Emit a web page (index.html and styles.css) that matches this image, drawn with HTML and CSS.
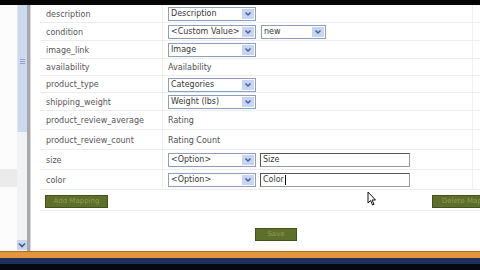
FILE: index.html
```html
<!DOCTYPE html>
<html>
<head>
<meta charset="utf-8">
<link rel="stylesheet" href="styles.css">
</head>
<body>
<div class="screen">
  <div class="topbar"></div>
  <div class="main">
    <div class="leftpane"><div class="leftblock"></div></div>
    <div class="scrollbar">
      <div class="thumb"><div class="grip"></div></div>
      <div class="track"></div>
      <div class="scrollbtn">
        <svg width="8" height="6" viewBox="0 0 8 6"><path d="M1 1.5 L4 4.5 L7 1.5" fill="none" stroke="#3c5a8c" stroke-width="1.6"/></svg>
      </div>
    </div>
    <div class="divider"></div>
    <div class="content">
      <div class="table">
        <div class="row h18">
          <div class="label">description</div>
          <div class="value"><span class="select w88"><span class="seltext">Description</span><span class="arrow"></span></span></div>
          <div class="extra"></div>
        </div>
        <div class="row h18">
          <div class="label">condition</div>
          <div class="value"><span class="select w88"><span class="seltext">&lt;Custom Value&gt;</span><span class="arrow"></span></span><span class="select w65"><span class="seltext">new</span><span class="arrow"></span></span></div>
          <div class="extra"></div>
        </div>
        <div class="row h18">
          <div class="label">image_link</div>
          <div class="value"><span class="select w88"><span class="seltext">Image</span><span class="arrow"></span></span></div>
          <div class="extra"></div>
        </div>
        <div class="row h17">
          <div class="label">availability</div>
          <div class="value">Availability</div>
          <div class="extra"></div>
        </div>
        <div class="row h17">
          <div class="label">product_type</div>
          <div class="value"><span class="select w88"><span class="seltext">Categories</span><span class="arrow"></span></span></div>
          <div class="extra"></div>
        </div>
        <div class="row h18">
          <div class="label">shipping_weight</div>
          <div class="value"><span class="select w88"><span class="seltext">Weight (lbs)</span><span class="arrow"></span></span></div>
          <div class="extra"></div>
        </div>
        <div class="row h19">
          <div class="label">product_review_average</div>
          <div class="value">Rating</div>
          <div class="extra"></div>
        </div>
        <div class="row h20">
          <div class="label">product_review_count</div>
          <div class="value">Rating Count</div>
          <div class="extra"></div>
        </div>
        <div class="row h20">
          <div class="label">size</div>
          <div class="value"><span class="select w88"><span class="seltext">&lt;Option&gt;</span><span class="arrow"></span></span><span class="input">Size</span></div>
          <div class="extra"></div>
        </div>
        <div class="row h20">
          <div class="label">color</div>
          <div class="value"><span class="select w88"><span class="seltext">&lt;Option&gt;</span><span class="arrow"></span></span><span class="input">Color<span class="caret"></span></span></div>
          <div class="extra"></div>
        </div>
      </div>
      <div class="actions">
        <span class="btn add">Add Mapping</span>
        <span class="btn del">Delete Mapping</span>
      </div>
      <div class="saverow">
        <span class="btn save">Save</span>
      </div>
    </div>
    <svg class="cursor" width="10" height="16" viewBox="0 0 10 16"><path d="M1 1 L1 12 L3.5 9.5 L5.5 14 L7 13.3 L5 9 L8.5 9 Z" fill="#fff" stroke="#111" stroke-width="1"/></svg>
  </div>
  <div class="footer">
    <div class="orange"></div>
    <div class="navy"></div>
    <div class="black"></div>
  </div>
</div>
</body>
</html>
```

FILE: styles.css
```css
html, body {
  margin: 0;
  padding: 0;
  width: 480px;
  height: 270px;
  overflow: hidden;
  background: #fff;
}
.screen {
  width: 480px;
  height: 270px;
  display: flex;
  flex-direction: column;
  font-family: "DejaVu Sans", Verdana, sans-serif;
  font-size: 8px;
  color: #505050;
}
.topbar {
  height: 5px;
  background: #050505;
  flex: none;
}
.main {
  flex: 1;
  display: flex;
  position: relative;
  overflow: hidden;
  min-height: 0;
}
.leftpane {
  width: 17px;
  flex: none;
  background: #fcfcfc;
  display: flex;
  flex-direction: column;
  justify-content: flex-start;
}
.leftblock {
  margin-top: 164px;
  height: 18px;
  background: #ebebeb;
}
.scrollbar {
  width: 10px;
  flex: none;
  display: flex;
  flex-direction: column;
  background: #f3f4f6;
}
.thumb {
  height: 127px;
  background: #cdd9ef;
  border-left: 1px solid #dfe7f6;
  display: flex;
  align-items: flex-start;
  justify-content: center;
}
.grip {
  margin-top: 54px;
  width: 5px;
  height: 5px;
  background: repeating-linear-gradient(#8ea3c7 0 1px, transparent 1px 2px);
}
.track {
  flex: 1;
  background: #f1f2f4;
}
.scrollbtn {
  height: 10px;
  margin-bottom: 1px;
  background: #c8d6f0;
  display: flex;
  align-items: center;
  justify-content: center;
}
.divider {
  width: 3px;
  flex: none;
  background: #a8a8a8;
  border-right: 1px solid #d8d8d8;
}
.content {
  flex: none;
  width: 472px;
  margin-left: 9px;
  display: flex;
  flex-direction: column;
}
.table {
  display: flex;
  flex-direction: column;
}
.row {
  display: grid;
  grid-template-columns: 123px 310px 1fr;
  box-sizing: border-box;
  border-bottom: 1px solid #ececec;
}
.h17 { height: 17px; }
.h18 { height: 18px; }
.h19 { height: 19px; }
.h20 { height: 20px; }
.label {
  padding-left: 6px;
  padding-top: 1px;
  display: flex;
  align-items: center;
  border-right: 1px solid #efefef;
  color: #555;
}
.value {
  padding-left: 5px;
  padding-top: 1px;
  display: flex;
  align-items: center;
  gap: 4px;
  color: #505050;
  border-right: 1px solid #f0f0f0;
}
.select {
  height: 14px;
  box-sizing: border-box;
  border: 1px solid #8aa0bd;
  background: #fff;
  display: flex;
  align-items: stretch;
  color: #383838;
}
.w88 { width: 88px; }
.w65 { width: 65px; margin-left: 1px; }
.seltext {
  flex: 1;
  padding-left: 2px;
  line-height: 12px;
  white-space: nowrap;
  overflow: hidden;
}
.arrow {
  width: 12px;
  margin: 1px;
  background: #c6d5f5 url("data:image/svg+xml;utf8,<svg xmlns='http://www.w3.org/2000/svg' width='12' height='10'><path d='M3.5 3.5 L6 6 L8.5 3.5' fill='none' stroke='%234b5f8a' stroke-width='1.5'/></svg>") center / 12px 10px no-repeat;
}
.input {
  width: 150px;
  height: 14px;
  box-sizing: border-box;
  border: 1px solid #9a9a9a;
  border-top-color: #555;
  border-left-color: #555;
  background: #fff;
  padding-left: 2px;
  line-height: 12px;
  color: #383838;
  display: flex;
  align-items: center;
}
.caret {
  display: inline-block;
  width: 1px;
  height: 10px;
  background: #111;
  margin-left: 1px;
}
.actions {
  display: flex;
  justify-content: space-between;
  padding: 5px 5px 0 5px;
  border-bottom: 1px solid #f2f2f2;
  height: 21px;
  box-sizing: border-box;
}
.btn {
  height: 13px;
  box-sizing: border-box;
  background: #5e6f2c;
  border: 1px solid #44511d;
  color: #8a9e52;
  font-size: 7px;
  line-height: 11px;
  text-align: center;
  white-space: nowrap;
  overflow: hidden;
}
.add { width: 63px; }
.del { width: 75px; }
.saverow {
  display: flex;
  justify-content: center;
  padding-top: 17px;
}
.save { width: 42px; }
.cursor {
  position: absolute;
  left: 367px;
  top: 186px;
}
.footer {
  flex: none;
  display: flex;
  flex-direction: column;
}
.orange {
  height: 6px;
  background: #e3953e;
  border-top: 1px solid #b86a20;
}
.navy {
  height: 6px;
  background: #1d2f5c;
}
.black {
  height: 6px;
  background: #060810;
}
```
